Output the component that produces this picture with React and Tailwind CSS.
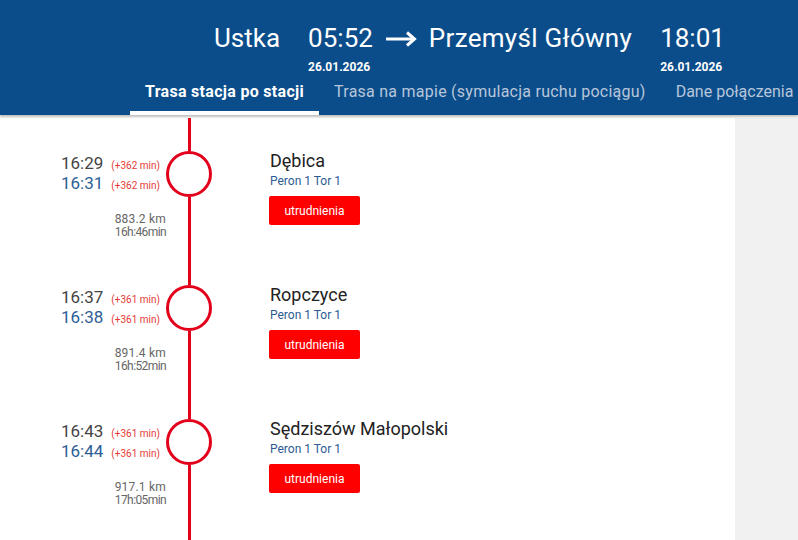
import React from "react";

const stations = [
  { arr: "16:29", dep: "16:31", delayA: "(+362 min)", delayD: "(+362 min)", km: "883.2 km", dur: "16h:46min", name: "Dębica" },
  { arr: "16:37", dep: "16:38", delayA: "(+361 min)", delayD: "(+361 min)", km: "891.4 km", dur: "16h:52min", name: "Ropczyce" },
  { arr: "16:43", dep: "16:44", delayA: "(+361 min)", delayD: "(+361 min)", km: "917.1 km", dur: "17h:05min", name: "Sędziszów Małopolski" },
];

function TimeBlock({ time }) {
  return (
    <div className="flex flex-col">
      <div className="text-[26px] leading-[30px]">{time}</div>
      <div className="mt-[7px] text-[12px] leading-[14px] font-bold">26.01.2026</div>
    </div>
  );
}

function Station({ s }) {
  return (
    <div className="flex h-[134px] shrink-0">
      <div className="w-[166px] flex flex-col">
        <div className="pl-[61px] pt-[35px]">
          <div className="flex items-baseline">
            <span className="text-[17px] leading-[20px] text-[#444]">{s.arr}</span>
            <span className="ml-[8px] text-[10px] text-[#e53935]">{s.delayA}</span>
          </div>
          <div className="flex items-baseline">
            <span className="text-[17px] leading-[20px] text-[#2d5e96]">{s.dep}</span>
            <span className="ml-[8px] text-[10px] text-[#e53935]">{s.delayD}</span>
          </div>
        </div>
        <div className="mt-[20px] text-right text-[12px] leading-[13px] text-[#666]">
          <div className="tracking-[0.2px]">{s.km}</div>
          <div className="tracking-[-0.6px]">{s.dur}</div>
        </div>
      </div>
      <div className="w-[46px] flex flex-col items-center">
        <div className="w-[3px] h-[33px] bg-[#e2001a]" />
        <div className="w-[46px] h-[46px] rounded-full border-[3px] border-[#e2001a] bg-white" />
        <div className="w-[3px] flex-1 bg-[#e2001a]" />
      </div>
      <div className="ml-[58px] pt-[32px] flex flex-col items-start">
        <div className="text-[18px] leading-[22px] text-[#222]">{s.name}</div>
        <div className="mt-[2px] text-[12px] leading-[14px] text-[#2b5b93]">Peron 1 Tor 1</div>
        <div className="mt-[8px] -ml-[1px] w-[91px] h-[29px] rounded-[2px] bg-[#ff0000] text-white text-[12px] flex items-center justify-center">
          utrudnienia
        </div>
      </div>
    </div>
  );
}

export default function App() {
  return (
    <div
      className="w-[798px] h-[540px] overflow-hidden flex flex-col bg-white"
      style={{ fontFamily: "Roboto, 'Noto Sans', sans-serif" }}
    >
      <div className="bg-[#0b4d8a] text-white shadow-[0_2px_2px_rgba(0,0,0,0.25)] relative z-10 shrink-0">
        <div className="flex items-start pl-[214px] pt-[23px] whitespace-nowrap">
          <div className="text-[26px] leading-[30px]">Ustka</div>
          <div className="ml-[28px]"><TimeBlock time="05:52" /></div>
          <svg className="ml-[12px] mt-[8px]" width="32" height="16" viewBox="0 0 32 16" fill="none">
            <path d="M1 8 H29" stroke="white" strokeWidth="3" />
            <path d="M22 1.5 L29.5 8 L22 14.5" stroke="white" strokeWidth="3" fill="none" />
          </svg>
          <div className="ml-[12px] text-[26px] leading-[30px] tracking-[0.3px]">Przemyśl Główny</div>
          <div className="ml-[28px]"><TimeBlock time="18:01" /></div>
        </div>
        <div className="flex pl-[130px] whitespace-nowrap overflow-hidden text-[16px] leading-[20px]">
          <div className="px-[15px] pt-[8px] pb-[9px] border-b-4 border-white font-bold tracking-[0.3px]">
            Trasa stacja po stacji
          </div>
          <div className="px-[15px] pt-[8px] pb-[9px] border-b-4 border-transparent text-[#b7c6da] tracking-[0.25px]">
            Trasa na mapie (symulacja ruchu pociągu)
          </div>
          <div className="px-[15px] pt-[8px] pb-[9px] border-b-4 border-transparent text-[#b7c6da]">
            Dane połączenia
          </div>
        </div>
      </div>
      <div className="flex flex-1 min-h-0 mt-[3px]">
        <div className="w-[735px] bg-white flex flex-col">
          {stations.map((s) => (
            <Station key={s.name} s={s} />
          ))}
          <div className="flex flex-1">
            <div className="w-[166px]" />
            <div className="w-[46px] flex justify-center">
              <div className="w-[3px] h-full bg-[#e2001a]" />
            </div>
          </div>
        </div>
        <div className="flex-1 bg-[#f1f1f1]" />
      </div>
    </div>
  );
}
